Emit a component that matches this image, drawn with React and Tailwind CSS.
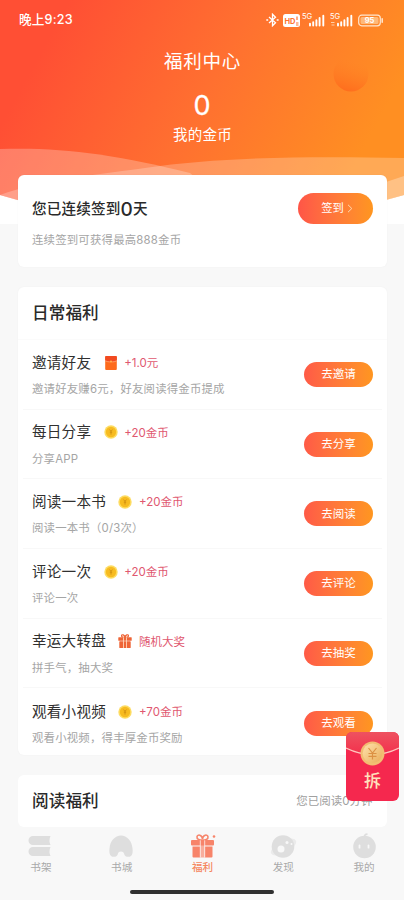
import React from "react";

function Coin() {
  return (
    <svg className="h-[14px] w-[14px]" viewBox="0 0 14 14">
      <circle cx="7" cy="7" r="6.7" fill="#fddc62" />
      <circle cx="7" cy="7" r="5.2" fill="#f7bb20" />
      <path d="M5.6 4.6 7 6.4l1.4-1.8M7 6.4V9.600M5.800 7.200h2.400" stroke="#cc8c10" strokeWidth=".8" fill="none" />
    </svg>
  );
}

function Packet() {
  return (
    <svg className="h-[14px] w-[14px]" viewBox="0 0 14 14">
      <rect x="1.2" y="0" width="11.6" height="14" rx="1" fill="#fd6a1c" />
      <path d="M1.2 1a1 1 0 0 1 1-1h9.6a1 1 0 0 1 1 1v3.600Q7 7 1.200 4.600Z" fill="#f24a20" />
      <path d="M1.200 4.800Q4 6 5.800 5.900M8.200 5.900Q10 6 12.800 4.800" stroke="#ffb48a" strokeWidth=".7" fill="none" />
      <circle cx="7" cy="5.6" r="1.1" fill="#ffb04e" />
    </svg>
  );
}

function Gift() {
  return (
    <svg className="h-[14px] w-[14px]" viewBox="0 0 14 14">
      <path d="M7 3.4C5.4 3.4 3.3 3 3.5 1.6 3.8 0 6.600.8 7 3.200 7.400.8 10.2 0 10.500 1.600 10.700 3 8.600 3.400 7 3.400Z" fill="none" stroke="#ee6436" strokeWidth="1.200" />
      <rect x="0.300" y="3.300" width="13.400" height="3.500" rx=".5" fill="#ee6436" />
      <rect x="1.300" y="7.300" width="11.400" height="6.700" rx=".6" fill="#ee6436" />
      <path d="M5.500 3.300V14M8.500 3.300V14" stroke="#ffe1c8" strokeWidth=".8" />
    </svg>
  );
}

const tasks = [
  { title: "邀请好友", icon: Packet, reward: "+1.0元", desc: "邀请好友赚6元，好友阅读得金币提成", action: "去邀请" },
  { title: "每日分享", icon: Coin, reward: "+20金币", desc: "分享APP", action: "去分享" },
  { title: "阅读一本书", icon: Coin, reward: "+20金币", desc: "阅读一本书（0/3次）", action: "去阅读" },
  { title: "评论一次", icon: Coin, reward: "+20金币", desc: "评论一次", action: "去评论" },
  { title: "幸运大转盘", icon: Gift, reward: "随机大奖", desc: "拼手气，抽大奖", action: "去抽奖" },
  { title: "观看小视频", icon: Coin, reward: "+70金币", desc: "观看小视频，得丰厚金币奖励", action: "去观看" },
];

function Task({ title, icon: Icon, reward, desc, action }) {
  return (
    <div className="mx-[5px] flex h-[69.700px] items-center justify-between border-b border-[#f8f8f8] pl-[9.500px] pr-[9px] last:border-0">
      <div className="flex flex-col pt-[2px]">
        <div className="flex h-[22px] items-center">
          <span className="text-[14.600px] tracking-[0.200px] text-[#303030]">{title}</span>
          <span className="-mt-[2px] ml-[12.500px] mr-[6.500px] flex h-[14px]"><Icon /></span>
          <span className="text-[11.500px] text-[#df5870]">{reward}</span>
        </div>
        <div className="mt-[5.500px] h-[18px] text-[11.400px] leading-[18px] tracking-[0.200px] text-[#a5a5a5]">{desc}</div>
      </div>
      <div className="flex h-[25px] w-[69px] items-center justify-center rounded-full bg-gradient-to-r from-[#ff5a46] to-[#ff961f] pl-[1px] pt-[1px] text-[11.500px] text-white">
        {action}
      </div>
    </div>
  );
}

function Signal({ dots }) {
  return (
    <svg className="h-[15px] w-[24px]" viewBox="0 0 24 15">
      <text x="0" y="6" fontSize="7.500" fill="#fff" fontFamily="Inter, sans-serif">5G</text>
      <path d="M8 10.800V12.500M11.200 9.300V12.500M14.400 7.300V12.500M17.600 5V12.500M21.300 2.700V12.500" stroke="#fff" strokeWidth="1.900" strokeLinecap="round" />
      {dots && <path d="M1 9.500h3.500M1.500 12h3" stroke="#ffd0a8" strokeWidth="1" />}
    </svg>
  );
}

function StatusBar() {
  return (
    <div className="flex h-[40px] items-center justify-between pl-[19px] pr-[20px] text-white">
      <span className="pt-[1px] text-[12.600px] font-medium tracking-[0.200px]">晚上9:23</span>
      <div className="flex items-center">
        <svg className="h-[14px] w-[13px]" viewBox="0 0 13 14" fill="none" stroke="#fff" strokeWidth="1.300">
          <path d="M3 4 9.500 9.800 6.500 12.800V1.200L9.500 4.200 3 10" />
          <path d="M.3 7h1.900M10.700 7h1.900" />
        </svg>
        <svg className="ml-[4px] h-[13px] w-[17px]" viewBox="0 0 17 13">
          <rect width="17" height="13" rx="2.500" fill="#fff" />
          <text x="1.500" y="9.500" fontSize="7.500" fontWeight="700" fill="#ff7430" fontFamily="Inter, sans-serif">HD</text>
          <path d="M14 2.500v3.500M13 9h2.500M13 11h2.500" stroke="#ff7430" strokeWidth="1.200" />
        </svg>
        <span className="ml-[2px]"><Signal /></span>
        <span className="ml-[4px]"><Signal dots /></span>
        <svg className="ml-[4px] h-[13px] w-[26px]" viewBox="0 0 26 13">
          <rect x=".7" y="1.200" width="21.600" height="10.600" rx="3" fill="none" stroke="#ffe6cf" strokeWidth="1.200" />
          <rect x="2.500" y="3" width="18" height="7" rx="1.500" fill="#ffb97a" />
          <text x="11.500" y="9.300" textAnchor="middle" fontSize="7.500" fontWeight="700" fill="#fff" fontFamily="Inter, sans-serif">95</text>
          <path d="M24.200 4.800v3.400" stroke="#ffe6cf" strokeWidth="1.500" strokeLinecap="round" />
        </svg>
      </div>
    </div>
  );
}

function HeaderArt() {
  return (
    <svg className="absolute left-0 top-0 h-[224px] w-[404px]" viewBox="0 0 404 224">
      <defs>
        <linearGradient id="sky" gradientUnits="userSpaceOnUse" x1="50" y1="35" x2="340" y2="193">
          <stop offset="0" stopColor="#ff4f34" />
          <stop offset=".5" stopColor="#ff7030" />
          <stop offset="1" stopColor="#ff8f22" />
        </linearGradient>
        <linearGradient id="ball" x1=".35" y1="1" x2=".6" y2="0">
          <stop offset="0" stopColor="#ff6a1c" stopOpacity=".9" />
          <stop offset=".85" stopColor="#ff7e24" stopOpacity="0" />
        </linearGradient>
      </defs>
      <rect width="404" height="224" fill="#fff" />
      <path d="M0 0H404V195Q300 225 200 225T0 195Z" fill="url(#sky)" />
      <circle cx="351" cy="74" r="17.500" fill="url(#ball)" />
      <path d="M0 149C60 147 115 154 190 173L250 224H100L0 195Z" fill="#fff" fillOpacity=".25" />
      <path d="M0 195C40 180 110 173 145 168C220 157 310 156 404 158V195L300 224H100Z" fill="#fff" fillOpacity=".23" />
      <path d="M380 184 404 176V195L380 202Z" fill="#fff" fillOpacity=".28" />
    </svg>
  );
}

const tabs = [
  {
    label: "书架",
    icon: (
      <g fill="#dedede">
        <path d="M7 3H24.500Q22.500 7.500 24.500 12H7A4.500 4.500 0 0 1 7 3Z" />
        <path d="M7 14H24.500Q22.500 18.500 24.500 23H7A4.500 4.500 0 0 1 7 14Z" />
      </g>
    ),
  },
  {
    label: "书城",
    icon: <path d="M4 23C2.500 21.500 2 19 2.500 15.500 3 8 8 2.500 14 2.500S25 8 25.500 15.500C26 19 25.500 21.500 24 23 22 24.500 18.500 24 17.500 22 17 19.500 16 18.500 14 18.500S11 19.500 10.500 22C9.500 24 6 24.500 4 23Z" fill="#dedede" />,
  },
  {
    label: "福利",
    active: true,
    icon: (
      <g fill="#f7846a" transform="translate(1 0)">
        <path d="M13.500 7C11 7 7.500 6.500 8 3.800 8.500 1 13 1.500 13.500 6 14 1.500 18.500 1 19 3.800 19.500 6.500 16 7 13.500 7Z" fill="none" stroke="#f7846a" strokeWidth="1.600" />
        <rect x="2" y="7" width="23" height="5.500" rx="1" />
        <path d="M3.500 13.500H11.300V24.500H4.500a1 1 0 0 1-1-1ZM15.700 13.500H23.500V23.500a1 1 0 0 1-1 1H15.700Z" />
        <path d="M11.300 12H15.700V24.500H11.300Z" fillOpacity=".65" />
        <path d="M11.300 7.300V24.500M15.700 7.300V24.500" stroke="#fff" strokeWidth=".7" />
        <circle cx="25" cy="3.500" r="1.300" />
      </g>
    ),
  },
  {
    label: "发现",
    icon: (
      <g transform="translate(.5 0)">
        <ellipse cx="14" cy="14" rx="14" ry="6" transform="rotate(-28 14 14)" fill="#ebebeb" />
        <circle cx="13.500" cy="13.500" r="11.300" fill="#dedede" />
        <circle cx="11.500" cy="16" r="3.500" fill="#f8f8f8" />
        <circle cx="17.500" cy="9.500" r="1.500" fill="#f8f8f8" />
        <circle cx="22" cy="11" r="1" fill="#f8f8f8" />
      </g>
    ),
  },
  {
    label: "我的",
    icon: (
      <g transform="translate(.5 0)">
        <circle cx="14" cy="14" r="11.300" fill="#dedede" />
        <path d="M14 4Q13.500 1.500 17 1.200" stroke="#dedede" strokeWidth="1.800" fill="none" />
        <path d="M9 12.500v2.200M18 12.500v2.200" stroke="#f8f8f8" strokeWidth="1.800" strokeLinecap="round" />
      </g>
    ),
  },
];

function TabBar() {
  return (
    <nav className="h-[73px] w-full bg-[#f8f8f8]">
      <div className="flex justify-around pt-[6px]">
        {tabs.map((tab) => (
          <div key={tab.label} className="flex w-[80.800px] flex-col items-center">
            <svg className="h-[26px] w-[28px] overflow-visible" viewBox="0 0 28 26">{tab.icon}</svg>
            <span className={"mt-[1px] pl-[1px] text-[10.600px] leading-[16px] " + (tab.active ? "font-medium text-[#f5875f]" : "text-[#a9a9a9]")}>{tab.label}</span>
          </div>
        ))}
      </div>
      <div className="mx-auto mt-[14px] h-[4px] w-[144px] rounded-full bg-[#303030]" />
    </nav>
  );
}

function FloatingPacket() {
  return (
    <div className="absolute left-[346px] top-[732px] flex h-[69px] w-[53px] flex-col items-center overflow-hidden rounded-[6px] bg-[#f5284e]">
      <svg className="h-[38px] w-[53px] shrink-0" viewBox="0 0 53 38">
        <defs>
          <linearGradient id="flap" x1="0" y1="0" x2="0" y2="1">
            <stop offset="0" stopColor="#ee5260" />
            <stop offset="1" stopColor="#f3304c" />
          </linearGradient>
          <linearGradient id="gold" x1="0" y1="0" x2="1" y2="1">
            <stop offset="0" stopColor="#ffe3ad" />
            <stop offset="1" stopColor="#e9ac59" />
          </linearGradient>
        </defs>
        <path d="M0 0H53V16Q26.500 29 0 16Z" fill="url(#flap)" />
        <path d="M0 16Q26.500 29 53 16" fill="none" stroke="#ffc5bd" strokeWidth="1.200" />
        <circle cx="26.500" cy="21.500" r="12" fill="#f2bd72" />
        <circle cx="26.500" cy="21.200" r="9.800" fill="url(#gold)" />
        <path d="M22.500 16 26.500 21l4-5M26.500 21v6.500M22.500 21.500h8M22.500 24.300h8" stroke="#dc9144" strokeWidth="1.200" fill="none" />
      </svg>
      <span className="text-[17px] font-medium leading-[22px] text-[#ffe3bd]">拆</span>
    </div>
  );
}

export default function App() {
  return (
    <div className="relative flex h-[900px] w-[404px] flex-col overflow-hidden bg-[#f8f8f8] font-['Inter','Noto_Sans_CJK_SC',sans-serif]">
      <HeaderArt />
      <div className="relative flex h-[827px] flex-col">
        <StatusBar />
        <header className="flex h-[135px] shrink-0 flex-col items-center text-white">
          <h1 className="mt-[8px] pl-[1px] text-[18.500px] leading-[26px] tracking-[0.700px]">福利中心</h1>
          <div className="mt-[17px] text-[27px] leading-[30px] [-webkit-text-stroke:0.300px_white]">0</div>
          <div className="mt-[4px] pl-[1px] text-[14.500px] leading-[20px] tracking-[0.300px]">我的金币</div>
        </header>
        <section className="mx-[17.500px] flex h-[92px] shrink-0 justify-between rounded-[6px] bg-white pl-[14.500px] pr-[14px] shadow-[0_0_2px_rgba(0,0,0,0.04)]">
          <div className="flex flex-col">
            <div className="mt-[23px] flex h-[24px] items-center text-[14.600px] font-medium tracking-[0.150px] text-[#2a2a2a]">
              您已连续签到<span className="text-[19px] leading-[22px]">0</span>天
            </div>
            <div className="mt-[9px] text-[11.400px] leading-[18px] tracking-[0.200px] text-[#a5a5a5]">连续签到可获得最高888金币</div>
          </div>
          <div className="mt-[18px] flex h-[31px] w-[75px] items-center justify-center gap-[3px] rounded-full bg-gradient-to-r from-[#ff5547] to-[#ff961f] pl-[4px] text-[11.300px] text-white">
            签到
            <svg className="h-[9px] w-[6px]" viewBox="0 0 6 9" fill="none" stroke="#ffd9ae"><path d="M1 .8 4.800 4.500 1 8.200" /></svg>
          </div>
        </section>
        <section className="mx-[17.500px] mt-[20px] h-[468px] shrink-0 rounded-[6px] bg-white shadow-[0_0_2px_rgba(0,0,0,0.04)]">
          <h2 className="flex h-[53px] items-center border-b border-[#fbfbfb] pl-[14.500px] text-[16.600px] font-medium tracking-[0.100px] text-[#2a2a2a]">日常福利</h2>
          {tasks.map((task) => (
            <Task key={task.title} {...task} />
          ))}
        </section>
        <section className="mx-[17.500px] mt-[20px] flex h-[52px] shrink-0 items-center justify-between rounded-[6px] bg-white pl-[14.500px] pr-[14px]">
          <h2 className="pt-[1px] text-[16.600px] font-medium tracking-[0.100px] text-[#2a2a2a]">阅读福利</h2>
          <span className="pt-[2px] text-[11.500px] text-[#a0a0a0]">您已阅读0分钟</span>
        </section>
      </div>
      <TabBar />
      <FloatingPacket />
    </div>
  );
}
